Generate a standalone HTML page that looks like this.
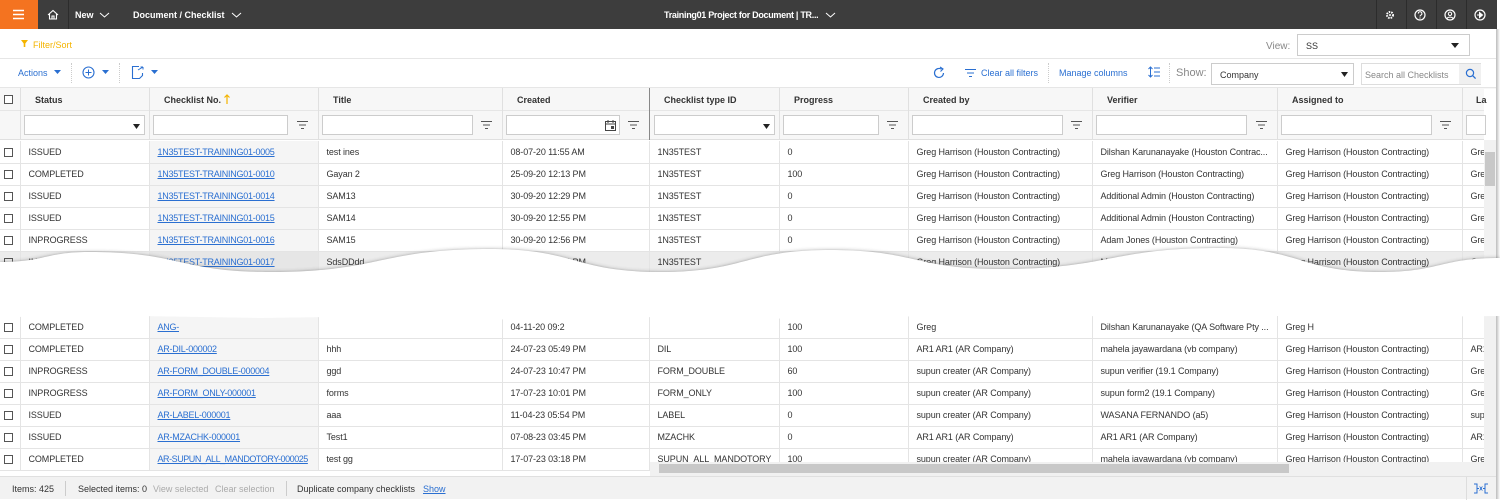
<!DOCTYPE html>
<html><head><meta charset="utf-8">
<style>
*{box-sizing:border-box;margin:0;padding:0}
body{width:1500px;height:499px;overflow:hidden;background:#fff;font-family:"Liberation Sans",sans-serif;font-size:9px;color:#333;position:relative}
.abs{position:absolute}
.top{left:0;top:0;width:1497px;height:29px;background:#3d3d3d;color:#fff;font-size:9px;font-weight:bold}
.top .burger{left:0;top:0;width:38px;height:29px;background:#f47320}
.top .sep{top:0;width:1px;height:29px;background:#2c2c2c}
.blue{color:#2a6fd1}
table{border-collapse:collapse;table-layout:fixed;position:absolute;left:0}
td{height:22px;border-bottom:1px solid #e4e4e4;border-right:1px solid #e4e4e4;padding:0 0 0 8px;white-space:nowrap;overflow:hidden;font-size:9px;color:#333;letter-spacing:-0.1px}
td.cb{padding:0 0 0 4px}
td.s{background:#f5f5f5}
td a{color:#2a6fd1;text-decoration:underline;letter-spacing:-0.25px}
.box{display:inline-block;width:9px;height:9px;border:1px solid #555;vertical-align:middle}
.inp{position:absolute;top:115px;height:20px;border:1px solid #ccc;background:#fff}
.fi{position:absolute;top:121px;width:11px;height:8px}
.hd{position:absolute;top:95px;font-weight:bold;font-size:9px;color:#333}
.vl{position:absolute;top:88px;width:1px;height:52px;background:#e0e0e0}
</style></head><body>
<div class="abs top">
 <div class="abs burger"><svg width="38" height="29"><g stroke="#fff" stroke-width="1.6"><path d="M13 10.5h11M13 14.5h11M13 18.5h11"/></g></svg></div>
 <div class="abs sep" style="left:68px"></div>
 <svg class="abs" style="left:47px;top:9px" width="12" height="11"><path d="M1 6L6 1.5 11 6M2.5 5v5h7V5M5 10V7h2v3" fill="none" stroke="#fff" stroke-width="1.1"/></svg>
 <div class="abs" style="left:75px;top:10px">New</div>
 <svg class="abs" style="left:99px;top:12px" width="11" height="6"><path d="M1 1l4.5 4 4.5-4" fill="none" stroke="#fff"/></svg>
 <div class="abs" style="left:133px;top:10px">Document / Checklist</div>
 <svg class="abs" style="left:231px;top:12px" width="11" height="6"><path d="M1 1l4.5 4 4.5-4" fill="none" stroke="#fff"/></svg>
 <div class="abs" style="left:664px;top:10px;letter-spacing:-0.3px">Training01 Project for Document | TR...</div>
 <svg class="abs" style="left:825px;top:12px" width="11" height="6"><path d="M1 1l4.5 4 4.5-4" fill="none" stroke="#fff"/></svg>
 <div class="abs sep" style="left:1376px"></div><div class="abs sep" style="left:1406px"></div><div class="abs sep" style="left:1436px"></div><div class="abs sep" style="left:1466px"></div>
 <svg class="abs" style="left:1385px;top:10px" width="10" height="10"><circle cx="5" cy="5" r="3" fill="none" stroke="#fff" stroke-width="2" stroke-dasharray="1.5 1"/><circle cx="5" cy="5" r="1" fill="#fff"/></svg>
 <svg class="abs" style="left:1414px;top:9px" width="12" height="12"><circle cx="6" cy="6" r="5" fill="none" stroke="#fff" stroke-width="1.2"/><path d="M4.3 4.6a1.8 1.8 0 1 1 2.4 1.6c-.5.3-.7.6-.7 1.3" fill="none" stroke="#fff"/><circle cx="6" cy="9" r=".6" fill="#fff"/></svg>
 <svg class="abs" style="left:1444px;top:9px" width="12" height="12"><circle cx="6" cy="6" r="5" fill="none" stroke="#fff" stroke-width="1.2"/><circle cx="6" cy="4.8" r="1.7" fill="none" stroke="#fff"/><path d="M3 9.5c1-1.8 5-1.8 6 0" fill="none" stroke="#fff"/></svg>
 <svg class="abs" style="left:1474px;top:9px" width="12" height="12"><circle cx="6" cy="6" r="5" fill="none" stroke="#fff" stroke-width="1.2"/><path d="M3 6h4M5.5 3.5L8.5 6 5.5 8.5z" fill="#fff" stroke="#fff"/></svg>
</div>
<div class="abs" style="left:1496px;top:29px;width:4px;height:470px;background:linear-gradient(90deg,#bbb,#fff)"></div>
<svg class="abs" style="left:21px;top:40px" width="7" height="7"><path d="M0 0h7L4.3 3.5V7H2.7V3.5z" fill="#f4b400"/></svg>
<div class="abs" style="left:33px;top:40px;color:#f4b400;font-size:9px">Filter/Sort</div>
<div class="abs" style="left:1266px;top:41px;color:#888;font-size:10px">View:</div>
<div class="abs" style="left:1297px;top:34px;width:173px;height:22px;border:1px solid #ccc"><span class="abs" style="left:8px;top:6px">SS</span><svg class="abs" style="left:153px;top:8px" width="8" height="5"><path d="M0 0h8L4 5z" fill="#222"/></svg></div>
<div class="abs" style="left:0;top:58px;width:1496px;height:1px;background:#e6e6e6"></div>
<div class="abs blue" style="left:18px;top:68px">Actions</div>
<svg class="abs" style="left:54px;top:70px" width="7" height="4"><path d="M0 0h7L3.5 4z" fill="#2a6fd1"/></svg>
<div class="abs" style="left:71px;top:63px;height:20px;border-left:1px dotted #ccc"></div>
<svg class="abs" style="left:82px;top:66px" width="13" height="13"><circle cx="6.5" cy="6.5" r="5.5" fill="none" stroke="#2a6fd1" stroke-width="1.1"/><path d="M6.5 3.5v6M3.5 6.5h6" stroke="#2a6fd1"/></svg>
<svg class="abs" style="left:102px;top:70px" width="7" height="4"><path d="M0 0h7L3.5 4z" fill="#2a6fd1"/></svg>
<div class="abs" style="left:119px;top:63px;height:20px;border-left:1px dotted #ccc"></div>
<svg class="abs" style="left:131px;top:65px" width="14" height="15"><path d="M8 1.5H1.5v12h7l3-3V8" fill="none" stroke="#2a6fd1" stroke-width="1.1"/><path d="M7 5l5-3M12 2l-2.5 0M12 2v2.5" stroke="#2a6fd1" fill="none"/></svg>
<svg class="abs" style="left:151px;top:70px" width="7" height="4"><path d="M0 0h7L3.5 4z" fill="#2a6fd1"/></svg>
<svg class="abs" style="left:932px;top:66px" width="14" height="14"><path d="M11.5 7A4.5 4.5 0 1 1 9.5 3.2" fill="none" stroke="#2a6fd1" stroke-width="1.2"/><path d="M8 1l3 2-2.5 2.5" fill="none" stroke="#2a6fd1" stroke-width="1.1"/></svg>
<svg class="abs" style="left:965px;top:69px" width="11" height="8"><path d="M0 .5h11M2 4h7M4 7.5h3" stroke="#2a6fd1"/></svg>
<div class="abs blue" style="left:981px;top:68px">Clear all filters</div>
<div class="abs" style="left:1048px;top:63px;height:20px;border-left:1px dotted #ccc"></div>
<div class="abs blue" style="left:1059px;top:68px">Manage columns</div>
<svg class="abs" style="left:1148px;top:66px" width="12" height="12"><path d="M2.5 1v10M0.5 3l2-2 2 2M0.5 9l2 2 2-2M6 2h6M6 6h6M6 10h6" fill="none" stroke="#2a6fd1"/></svg>
<div class="abs" style="left:1169px;top:63px;height:20px;border-left:1px dotted #ccc"></div>
<div class="abs" style="left:1176px;top:67px;color:#888;font-size:11px">Show:</div>
<div class="abs" style="left:1211px;top:63px;width:143px;height:22px;border:1px solid #ccc"><span class="abs" style="left:8px;top:6px">Company</span><svg class="abs" style="left:129px;top:8px" width="7" height="5"><path d="M0 0h7L3.5 5z" fill="#222"/></svg></div>
<div class="abs" style="left:1361px;top:63px;width:120px;height:22px;border:1px solid #ddd"><span class="abs" style="left:3px;top:6px;color:#888">Search all Checklists</span><div class="abs" style="left:97px;top:0;width:22px;height:20px;background:#f0f0f0"></div><svg class="abs" style="left:103px;top:4px" width="12" height="12"><circle cx="5" cy="5" r="3.6" fill="none" stroke="#2a6fd1" stroke-width="1.2"/><path d="M7.6 7.6l3 3" stroke="#2a6fd1" stroke-width="1.3"/></svg></div>
<div class="abs" style="left:0;top:87px;width:1496px;height:2px;background:linear-gradient(#ddd,#fff)"></div>
<div class="abs" style="left:0;top:89px;width:1484px;height:51px;background:#f7f7f7;border-bottom:1px solid #e0e0e0"></div>
<div class="abs" style="left:0;top:110px;width:1484px;height:1px;background:#e6e6e6"></div>
<span class="abs box" style="left:4px;top:95px;background:#fff"></span>
<div class="vl" style="left:20px"></div><div class="vl" style="left:149px"></div><div class="vl" style="left:318px"></div><div class="vl" style="left:502px"></div><div class="vl" style="left:649px;background:#888"></div><div class="vl" style="left:779px"></div><div class="vl" style="left:908px"></div><div class="vl" style="left:1092px"></div><div class="vl" style="left:1277px"></div><div class="vl" style="left:1462px"></div>
<div class="hd" style="left:35px">Status</div><div class="hd" style="left:164px">Checklist No.</div><div class="hd" style="left:333px">Title</div><div class="hd" style="left:517px">Created</div><div class="hd" style="left:664px">Checklist type ID</div><div class="hd" style="left:794px">Progress</div><div class="hd" style="left:923px">Created by</div><div class="hd" style="left:1107px">Verifier</div><div class="hd" style="left:1292px">Assigned to</div><div class="hd" style="left:1476px">La</div>
<svg class="abs" style="left:224px;top:94px" width="6" height="10"><path d="M3 10V1M0.5 3.5L3 1l2.5 2.5" fill="none" stroke="#f4b400" stroke-width="1.2"/></svg>
<div class="inp" style="left:24px;width:121px"><svg class="abs" style="left:108px;top:8px" width="7" height="5"><path d="M0 0h7L3.5 5z" fill="#222"/></svg></div>
<div class="inp" style="left:153px;width:135px"></div><svg class="fi" style="left:297px"><path d="M0 .5h11M2 4h7M4 7.5h3" stroke="#555"/></svg>
<div class="inp" style="left:322px;width:151px"></div><svg class="fi" style="left:481px"><path d="M0 .5h11M2 4h7M4 7.5h3" stroke="#555"/></svg>
<div class="inp" style="left:506px;width:114px"><svg class="abs" style="left:98px;top:4px" width="11" height="11"><rect x=".5" y="1.5" width="10" height="9" fill="none" stroke="#444"/><path d="M.5 4h10M3 0v3M8 0v3" stroke="#444"/><rect x="6" y="6" width="3" height="3" fill="#444"/></svg></div><svg class="fi" style="left:628px"><path d="M0 .5h11M2 4h7M4 7.5h3" stroke="#555"/></svg>
<div class="inp" style="left:654px;width:121px"><svg class="abs" style="left:108px;top:8px" width="7" height="5"><path d="M0 0h7L3.5 5z" fill="#222"/></svg></div>
<div class="inp" style="left:783px;width:96px"></div><svg class="fi" style="left:887px"><path d="M0 .5h11M2 4h7M4 7.5h3" stroke="#555"/></svg>
<div class="inp" style="left:912px;width:151px"></div><svg class="fi" style="left:1071px"><path d="M0 .5h11M2 4h7M4 7.5h3" stroke="#555"/></svg>
<div class="inp" style="left:1096px;width:151px"></div><svg class="fi" style="left:1256px"><path d="M0 .5h11M2 4h7M4 7.5h3" stroke="#555"/></svg>
<div class="inp" style="left:1281px;width:151px"></div><svg class="fi" style="left:1440px"><path d="M0 .5h11M2 4h7M4 7.5h3" stroke="#555"/></svg>
<div class="inp" style="left:1466px;width:20px"></div>
<table style="top:141px;width:1484px">
<colgroup><col style="width:20px"><col style="width:129px"><col style="width:169px"><col style="width:184px"><col style="width:147px"><col style="width:130px"><col style="width:129px"><col style="width:184px"><col style="width:185px"><col style="width:185px"><col style="width:22px"></colgroup>
<tr><td class="cb"><span class="box"></span></td><td>ISSUED</td><td class="s"><a>1N35TEST-TRAINING01-0005</a></td><td>test ines</td><td>08-07-20 11:55 AM</td><td>1N35TEST</td><td>0</td><td>Greg Harrison (Houston Contracting)</td><td>Dilshan Karunanayake (Houston Contrac...</td><td>Greg Harrison (Houston Contracting)</td><td>Gre</td></tr>
<tr><td class="cb"><span class="box"></span></td><td>COMPLETED</td><td class="s"><a>1N35TEST-TRAINING01-0010</a></td><td>Gayan 2</td><td>25-09-20 12:13 PM</td><td>1N35TEST</td><td>100</td><td>Greg Harrison (Houston Contracting)</td><td>Greg Harrison (Houston Contracting)</td><td>Greg Harrison (Houston Contracting)</td><td>Gre</td></tr>
<tr><td class="cb"><span class="box"></span></td><td>ISSUED</td><td class="s"><a>1N35TEST-TRAINING01-0014</a></td><td>SAM13</td><td>30-09-20 12:29 PM</td><td>1N35TEST</td><td>0</td><td>Greg Harrison (Houston Contracting)</td><td>Additional Admin (Houston Contracting)</td><td>Greg Harrison (Houston Contracting)</td><td>Gre</td></tr>
<tr><td class="cb"><span class="box"></span></td><td>ISSUED</td><td class="s"><a>1N35TEST-TRAINING01-0015</a></td><td>SAM14</td><td>30-09-20 12:55 PM</td><td>1N35TEST</td><td>0</td><td>Greg Harrison (Houston Contracting)</td><td>Additional Admin (Houston Contracting)</td><td>Greg Harrison (Houston Contracting)</td><td>Gre</td></tr>
<tr><td class="cb"><span class="box"></span></td><td>INPROGRESS</td><td class="s"><a>1N35TEST-TRAINING01-0016</a></td><td>SAM15</td><td>30-09-20 12:56 PM</td><td>1N35TEST</td><td>0</td><td>Greg Harrison (Houston Contracting)</td><td>Adam Jones (Houston Contracting)</td><td>Greg Harrison (Houston Contracting)</td><td>Gre</td></tr>
<tr style="background:#ececec"><td class="cb"><span class="box"></span></td><td>INPROGRESS</td><td class="s" style="background:#e6e6e6"><a>1N35TEST-TRAINING01-0017</a></td><td>SdsDDdd</td><td>30-09-20 01:02 PM</td><td style="border-left:1px solid #888">1N35TEST</td><td>0</td><td>Greg Harrison (Houston Contracting)</td><td>Mahela</td><td>Greg Harrison (Houston Contracting)</td><td>Gre</td></tr>
</table>
<table style="top:316px;width:1484px">
<colgroup><col style="width:20px"><col style="width:129px"><col style="width:169px"><col style="width:184px"><col style="width:147px"><col style="width:130px"><col style="width:129px"><col style="width:184px"><col style="width:185px"><col style="width:185px"><col style="width:22px"></colgroup>
<tr><td class="cb"><span class="box"></span></td><td>COMPLETED</td><td class="s"><a>ANG-</a></td><td></td><td>04-11-20 09:2</td><td></td><td>100</td><td>Greg</td><td>Dilshan Karunanayake (QA Software Pty ...</td><td>Greg H</td><td></td></tr>
<tr><td class="cb"><span class="box"></span></td><td>COMPLETED</td><td class="s"><a>AR-DIL-000002</a></td><td>hhh</td><td>24-07-23 05:49 PM</td><td style="border-left:1px solid #888">DIL</td><td>100</td><td>AR1 AR1 (AR Company)</td><td>mahela jayawardana (vb company)</td><td>Greg Harrison (Houston Contracting)</td><td>AR1</td></tr>
<tr><td class="cb"><span class="box"></span></td><td>INPROGRESS</td><td class="s"><a>AR-FORM_DOUBLE-000004</a></td><td>ggd</td><td>24-07-23 10:47 PM</td><td style="border-left:1px solid #888">FORM_DOUBLE</td><td>60</td><td>supun creater (AR Company)</td><td>supun verifier (19.1 Company)</td><td>Greg Harrison (Houston Contracting)</td><td>Gre</td></tr>
<tr><td class="cb"><span class="box"></span></td><td>INPROGRESS</td><td class="s"><a>AR-FORM_ONLY-000001</a></td><td>forms</td><td>17-07-23 10:01 PM</td><td style="border-left:1px solid #888">FORM_ONLY</td><td>100</td><td>supun creater (AR Company)</td><td>supun form2 (19.1 Company)</td><td>Greg Harrison (Houston Contracting)</td><td>Gre</td></tr>
<tr><td class="cb"><span class="box"></span></td><td>ISSUED</td><td class="s"><a>AR-LABEL-000001</a></td><td>aaa</td><td>11-04-23 05:54 PM</td><td style="border-left:1px solid #888">LABEL</td><td>0</td><td>supun creater (AR Company)</td><td>WASANA FERNANDO (a5)</td><td>Greg Harrison (Houston Contracting)</td><td>sup</td></tr>
<tr><td class="cb"><span class="box"></span></td><td>ISSUED</td><td class="s"><a>AR-MZACHK-000001</a></td><td>Test1</td><td>07-08-23 03:45 PM</td><td style="border-left:1px solid #888">MZACHK</td><td>0</td><td>AR1 AR1 (AR Company)</td><td>AR1 AR1 (AR Company)</td><td>Greg Harrison (Houston Contracting)</td><td>AR1</td></tr>
<tr><td class="cb"><span class="box"></span></td><td>COMPLETED</td><td class="s"><a style="letter-spacing:-0.45px">AR-SUPUN_ALL_MANDOTORY-000025</a></td><td>test gg</td><td>17-07-23 03:18 PM</td><td style="border-left:1px solid #888">SUPUN_ALL_MANDOTORY</td><td>100</td><td>supun creater (AR Company)</td><td>mahela jayawardana (vb company)</td><td>Greg Harrison (Houston Contracting)</td><td>Gre</td></tr>
</table>
<div class="abs" style="left:1484px;top:140px;width:12px;height:336px;background:#f1f1f1"></div>
<div class="abs" style="left:1485px;top:152px;width:10px;height:34px;background:#c8c8c8"></div>
<div class="abs" style="left:650px;top:462px;width:834px;height:14px;background:#f1f1f1"></div>
<div class="abs" style="left:659px;top:464px;width:630px;height:9px;background:#c8c8c8"></div>
<svg class="abs" style="left:0;top:240px" width="1500" height="90">
<defs><filter id="sh" x="-5%" y="-50%" width="110%" height="200%"><feGaussianBlur stdDeviation="2.5"/></filter></defs>
<path d="M0,22 C45,22 45,12 90,12 C180,12 180,32 270,32 C380,32 380,9 490,9 C575,9 575,32 660,32 C745,32 745,10 830,10 C915,10 915,29 1000,29 C1110,29 1110,8 1220,8 C1300,8 1300,32 1380,32 C1440,32 1440,18 1500,18" fill="none" stroke="#444" stroke-width="5" filter="url(#sh)" transform="translate(0,4)"/>
<path d="M0,22 C45,22 45,12 90,12 C180,12 180,32 270,32 C380,32 380,9 490,9 C575,9 575,32 660,32 C745,32 745,10 830,10 C915,10 915,29 1000,29 C1110,29 1110,8 1220,8 C1300,8 1300,32 1380,32 C1440,32 1440,18 1500,18 L1500,76 L1400,77 L1300,75 L1200,78 L1100,76 L1000,78 L880,76 L760,79 L640,77 L520,80 L400,76 L260,78 L140,76 L0,77 Z" fill="#fff"/>
</svg>
<div class="abs" style="left:0;top:476px;width:1496px;height:23px;background:#f2f2f2;border-top:1px solid #e0e0e0;font-size:9px">
 <span class="abs" style="left:12px;top:7px">Items: 425</span>
 <div class="abs" style="left:65px;top:4px;height:15px;border-left:1px solid #ccc"></div>
 <span class="abs" style="left:78px;top:7px">Selected items: 0</span>
 <span class="abs" style="left:153px;top:7px;color:#aaa">View selected</span>
 <span class="abs" style="left:215px;top:7px;color:#aaa">Clear selection</span>
 <div class="abs" style="left:286px;top:4px;height:15px;border-left:1px solid #ccc"></div>
 <span class="abs" style="left:297px;top:7px">Duplicate company checklists</span>
 <span class="abs" style="left:423px;top:7px;color:#2a6fd1;text-decoration:underline">Show</span>
 <div class="abs" style="left:1466px;top:0;height:23px;border-left:1px solid #ddd"></div>
 <svg class="abs" style="left:1473px;top:6px" width="16" height="11"><path d="M1 1h3v9H1M15 1h-3v9h3M4 5.5h2M10 5.5h2" fill="none" stroke="#2a6fd1"/><path d="M6.5 3.5l2 2-2 2M9.5 3.5l-2 2 2 2" fill="none" stroke="#2a6fd1" stroke-width=".8"/></svg>
</div>
</body></html>
